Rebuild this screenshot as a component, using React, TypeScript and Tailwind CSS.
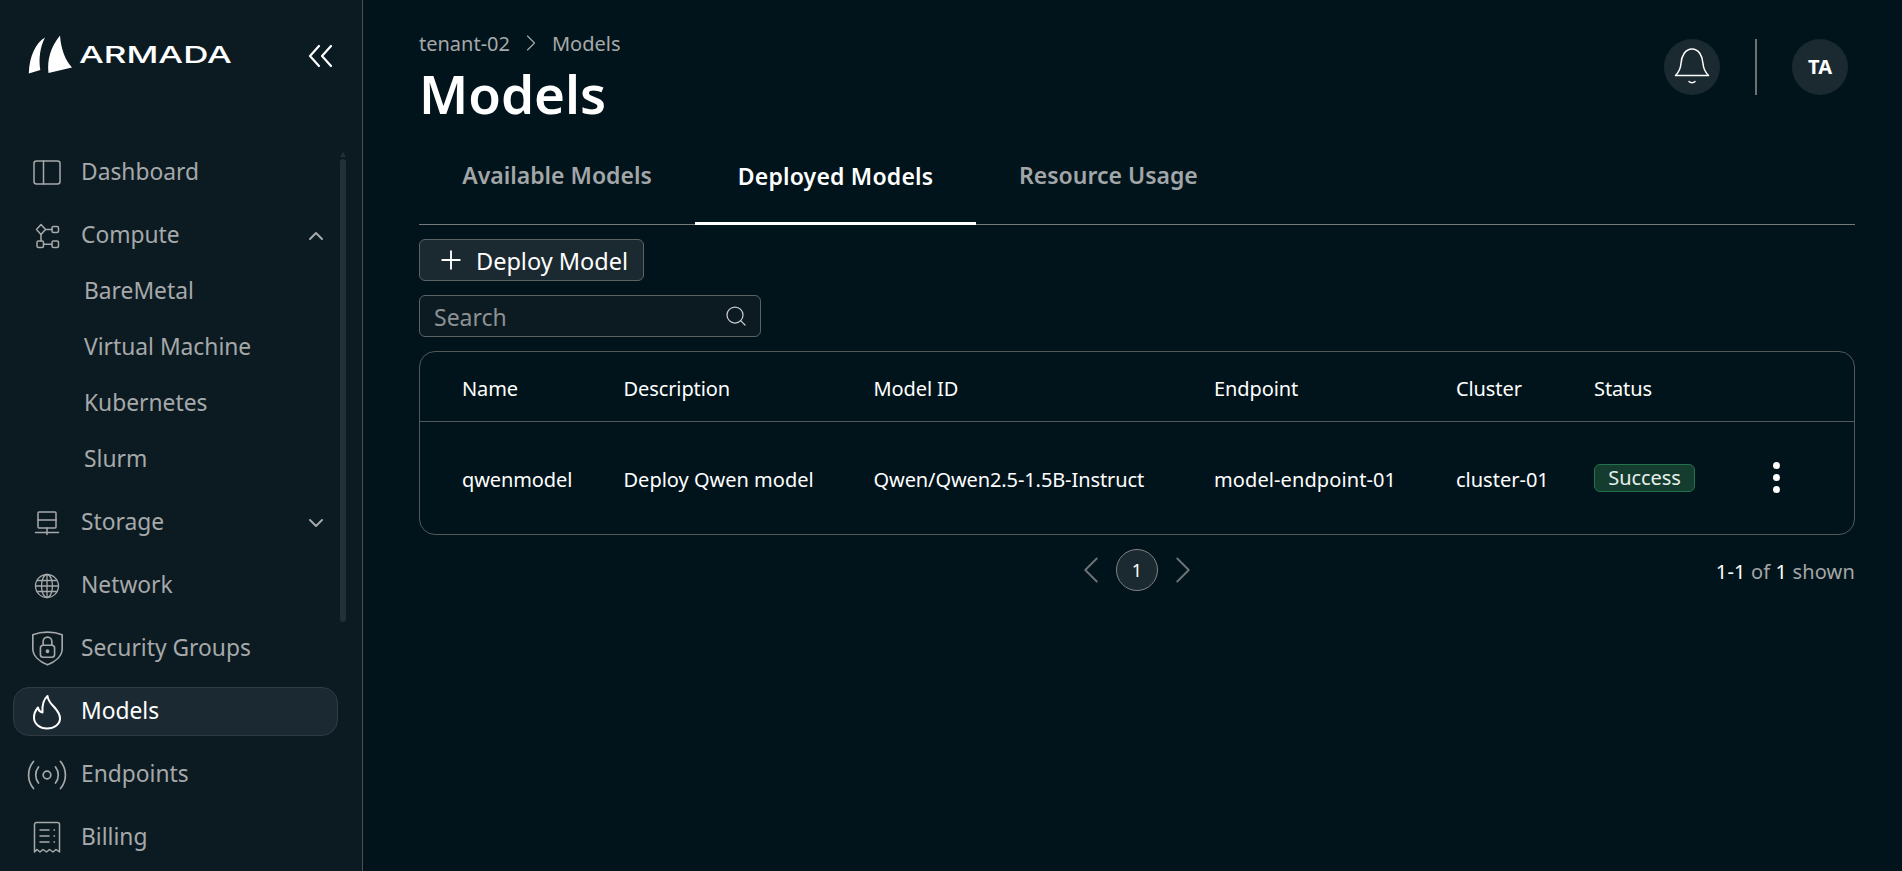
import { ChevronDown, ChevronLeft, ChevronRight, ChevronUp, Plus, Search } from "lucide-react";

const svgProps = { fill: "none", stroke: "currentColor", strokeWidth: 1.5, strokeLinecap: "round" as const, strokeLinejoin: "round" as const };

function DashboardIcon() {
  return (
    <svg width="28" height="25" viewBox="0 0 28 25" {...svgProps}>
      <rect x="1" y="1" width="26" height="23" rx="2.5" />
      <path d="M10.5 1v23" />
    </svg>
  );
}

function ComputeIcon() {
  return (
    <svg width="26" height="26" viewBox="0 0 26 26" {...svgProps}>
      <path d="M7 1.5l4.5 5-4.5 5-4.5-5z" />
      <rect x="18" y="3.5" width="6.5" height="6" rx="1.5" />
      <rect x="3" y="18" width="6.5" height="6.5" rx="1.5" />
      <rect x="18" y="18" width="6.5" height="6.5" rx="1.5" />
      <path d="M11.5 6.5H18M7 11.5V18M9.5 21.2H18" />
    </svg>
  );
}

function StorageIcon() {
  return (
    <svg width="26" height="26" viewBox="0 0 26 26" {...svgProps}>
      <rect x="4" y="2" width="18" height="16" rx="1" />
      <path d="M4 10h18M13 18v6.5M1.500 22.500h23" />
    </svg>
  );
}

function GlobeIcon() {
  return (
    <svg width="26" height="26" viewBox="0 0 26 26" fill="none" stroke="currentColor" strokeWidth="1.300">
      <circle cx="13" cy="13" r="11.500" />
      <ellipse cx="13" cy="13" rx="5.500" ry="11.500" />
      <path d="M13 1.500v23M1.500 13h23M3.200 7.500h19.600M3.200 18.500h19.600" />
    </svg>
  );
}

function ShieldIcon() {
  return (
    <svg width="35" height="37" viewBox="0 0 32 34" {...svgProps}>
      <path d="M16 2c4.500 0 9.500.8 13.500 2.300v13c0 6.500-6 11.800-13.500 14.700C8.500 29.100 2.500 23.800 2.500 17.300v-13C6.500 2.800 11.500 2 16 2z" />
      <rect x="9.500" y="14" width="13" height="11" rx="2.500" />
      <path d="M12 14v-3.500a4 4 0 0 1 8 0V14" />
      <circle cx="16" cy="19.500" r="1" fill="currentColor" />
    </svg>
  );
}

function FlameIcon() {
  return (
    <svg width="30" height="36" viewBox="0 0 30 36" fill="none" stroke="currentColor" strokeWidth="2" strokeLinejoin="round">
      <path d="M15.500 2c.5 5.500 4 8 7.500 12 2.800 3.200 5 6.500 5 10.500C28 30.500 22 34.500 15 34.500S2 30 2 23.500c0-4 1.800-7.500 4-10 .4 2.500 2 4.500 4.500 5C10 12 11 6 15.500 2z" />
    </svg>
  );
}

function RadioIcon() {
  return (
    <svg width="40" height="30" viewBox="0 0 40 30" fill="none" stroke="currentColor" strokeWidth="1.700" strokeLinecap="round">
      <circle cx="20" cy="15" r="3.800" />
      <path d="M11.500 7a13 13 0 0 0 0 16M28.500 7a13 13 0 0 1 0 16M6.500 1.500a21 21 0 0 0 0 27M33.500 1.500a21 21 0 0 1 0 27" />
    </svg>
  );
}

function ReceiptIcon() {
  return (
    <svg width="28" height="33" viewBox="0 0 28 33" {...svgProps}>
      <path d="M1.500 31V3.500a2 2 0 0 1 2-2h21a2 2 0 0 1 2 2V31l-3.500-2.500-3 2.500-3.500-2.500-3 2.500-3.500-2.500-3 2.500-3-2.500z" />
      <path d="M7 9h9M7 15h9M7 21h9M21 9h.5M21 15h.5M21 21h.5" />
    </svg>
  );
}

function BellIcon() {
  return (
    <svg width="36" height="38" viewBox="0 0 36 38" fill="none" stroke="currentColor" strokeWidth="1.500" strokeLinecap="round" strokeLinejoin="round">
      <path d="M1.500 27.500h33c-3-3-5-6-5.500-12C28.500 7.500 24.500 1 18 1S7.500 7.500 7 15.500c-.5 6-2.500 9-5.500 12z" />
      <path d="M15 33.500c1.500 1.500 4.500 1.500 6 0" />
    </svg>
  );
}

function SailsLogo() {
  return (
    <svg width="44" height="40" viewBox="0 0 44 40" fill="white" className="shrink-0">
      <path d="M17 2.500C8 8 1.500 20 .8 38.500l11.500-3.500C10.500 24 12 12 17 2.500z" />
      <path d="M32 .5C33 14 37 25 44 32.500L20.500 38c-1.500-13 2-26 11.500-37.500z" />
    </svg>
  );
}

function CollapseIcon() {
  return (
    <svg width="26" height="24" viewBox="0 0 26 24" fill="none" stroke="white" strokeWidth="2.200" strokeLinecap="round" strokeLinejoin="round" className="ml-auto mt-[9px] shrink-0">
      <path d="M12 2 3 12l9 10M24 2l-9 10 9 10" />
    </svg>
  );
}

function NavRow({ icon, label, chevron, active }: { icon: React.ReactNode; label: string; chevron?: "up" | "down"; active?: boolean }) {
  return (
    <div className={`relative flex h-[49px] shrink-0 items-center rounded-2xl border pl-[67px] pr-[9px] text-[22.800px] ${active ? "border-[#2e3b42] bg-[#1b2a32] text-white" : "border-transparent text-[#a6a9aa]"}`}>
      <span className="absolute left-[33px] top-1/2 flex h-0 w-0 items-center justify-center [&>svg]:shrink-0">{icon}</span>
      <span className="flex-1">{label}</span>
      {chevron === "up" && <ChevronUp size={24} strokeWidth={2} />}
      {chevron === "down" && <ChevronDown size={24} strokeWidth={2} />}
    </div>
  );
}

function SubRow({ label }: { label: string }) {
  return <div className="flex h-[49px] items-center pl-[71px] text-[22.800px] text-[#a6a9aa]">{label}</div>;
}

function Sidebar() {
  return (
    <aside className="relative flex h-full w-[363px] shrink-0 flex-col overflow-hidden border-r border-[#4b5053] bg-[#0c1b22]">
      <div className="flex h-[148px] items-start pl-[28px] pr-[29px] pt-[35px]">
        <SailsLogo />
        <span className="ml-[7px] mt-[4px] origin-left scale-x-[1.520] font-['Inter',sans-serif] text-[23px] font-medium leading-[32px] text-white">ARMADA</span>
        <CollapseIcon />
      </div>
      <nav className="flex w-[338px] flex-col gap-[14px] pl-[13px]">
        <NavRow icon={<DashboardIcon />} label="Dashboard" />
        <div>
          <NavRow icon={<ComputeIcon />} label="Compute" chevron="up" />
          <div className="mt-[7px] flex flex-col gap-[7px]">
            <SubRow label="BareMetal" />
            <SubRow label="Virtual Machine" />
            <SubRow label="Kubernetes" />
            <SubRow label="Slurm" />
          </div>
        </div>
        <NavRow icon={<StorageIcon />} label="Storage" chevron="down" />
        <NavRow icon={<GlobeIcon />} label="Network" />
        <NavRow icon={<ShieldIcon />} label="Security Groups" />
        <NavRow icon={<FlameIcon />} label="Models" active />
        <NavRow icon={<RadioIcon />} label="Endpoints" />
        <NavRow icon={<ReceiptIcon />} label="Billing" />
      </nav>
      {/* scrollbar */}
      <div className="absolute left-[340px] top-[159px] h-[463px] w-[6px] rounded-full bg-[#223138]" />
      <div className="absolute left-[340px] top-[152px] h-0 w-0 border-x-[3px] border-b-[5px] border-x-transparent border-b-[#223138]" />
    </aside>
  );
}

const columns = "grid grid-cols-[161.500px_250px_340.500px_242px_137px_1fr] items-center pl-[42px] pt-[4px]";

function ModelsTable() {
  return (
    <div className="mt-[14px] rounded-2xl border border-[#53585b] text-[20px] tracking-[-0.1px] text-white">
      <div className={`${columns} h-[70px] border-b border-[#53585b]`}>
        <span>Name</span>
        <span>Description</span>
        <span>Model ID</span>
        <span>Endpoint</span>
        <span>Cluster</span>
        <span className="pl-[1px]">Status</span>
      </div>
      <div className={`${columns} h-[112px]`}>
        <span>qwenmodel</span>
        <span className="tracking-normal">Deploy Qwen model</span>
        <span>Qwen/Qwen2.5-1.5B-Instruct</span>
        <span className="tracking-[0.1px]">model-endpoint-01</span>
        <span className="tracking-normal">cluster-01</span>
        <div className="-mt-[4px] flex items-center pl-[1px]">
          <span className="flex h-[28px] w-[101px] items-center justify-center rounded-md border border-[#23734d] bg-[#143d2f] text-[#e8efec]">Success</span>
          <span className="ml-[78px] -mt-[2px] flex flex-col gap-[5px]">
            <span className="h-[7px] w-[7px] rounded-full bg-white" />
            <span className="h-[7px] w-[7px] rounded-full bg-white" />
            <span className="h-[7px] w-[7px] rounded-full bg-white" />
          </span>
        </div>
      </div>
    </div>
  );
}

export default function App() {
  return (
    <div className="flex h-screen w-full overflow-hidden bg-[#01141b] font-['Noto_Sans',sans-serif]">
      <Sidebar />
      <main className="flex min-w-0 flex-1 flex-col pl-[56px] pr-[47px]">
        <div className="flex items-start justify-between pt-[39px] pr-[7px]">
          <div className="-mt-[9px]">
            <div className="flex items-center text-[20px] leading-[28px] text-[#a6a9aa]">
              <span>tenant-02</span>
              <ChevronRight size={28} strokeWidth={1} className="mx-[7px] -mt-[2px]" />
              <span>Models</span>
            </div>
            <h1 className="mt-[2px] text-[53px] font-semibold leading-[68px] text-white">Models</h1>
          </div>
          <div className="flex items-center">
            <div className="flex h-[56px] w-[56px] items-center justify-center rounded-full bg-[#1b2a31] text-white">
              <BellIcon />
            </div>
            <div className="mx-[35px] h-[56px] w-[2px] bg-[#6d7174]" />
            <div className="flex h-[56px] w-[56px] items-center justify-center rounded-full bg-[#1b2a31] text-[20px] font-bold text-white">TA</div>
          </div>
        </div>
        <div className="flex h-[97px] items-end border-b border-[#75797b] text-[23px] font-semibold">
          <div className="flex h-[88px] w-[276px] items-center justify-center pb-[9px] text-[#a3a6a8]">Available Models</div>
          <div className="-mb-px flex h-[88px] w-[281px] items-center justify-center border-b-[3px] border-white pb-[6px] tracking-[0.2px] text-white">Deployed Models</div>
          <div className="flex h-[88px] items-center pl-[43px] pb-[9px] text-[#a3a6a8]">Resource Usage</div>
        </div>
        <button className="mt-[14px] flex h-[42px] w-[225px] items-center rounded-md border border-[#5d6265] bg-[#1b2a31] pl-[18px] text-[23.500px] text-white">
          <Plus size={30} strokeWidth={1.500} className="mr-[10px] ml-[-2px]" />
          <span className="pt-[3px]">Deploy Model</span>
        </button>
        <div className="mt-[14px] flex h-[42px] w-[342px] items-center justify-between rounded-md border border-[#5d6265] bg-[#0c1b22] pl-[14px] pr-[12px] text-[23px] text-[#8d9194]">
          <span className="pt-[3px]">Search</span>
          <Search size={24} strokeWidth={1.250} className="text-[#c9cbcc]" />
        </div>
        <ModelsTable />
        <div className="mt-[12px] grid grid-cols-[1fr_auto_1fr] items-center">
          <div />
          <div className="flex items-center gap-[2px] text-[#6d7276]">
            <ChevronLeft size={46} strokeWidth={1} />
            <span className="flex h-[42px] w-[42px] items-center justify-center rounded-full border border-[#7d8285] bg-[#1b2a31] text-[18px] text-white">1</span>
            <ChevronRight size={46} strokeWidth={1} />
          </div>
          <div className="mt-[3px] text-right text-[20px] tracking-[0.15px] text-[#a3a6a8]">
            <span className="text-white">1-1</span> of <span className="text-white">1</span> shown
          </div>
        </div>
      </main>
    </div>
  );
}
